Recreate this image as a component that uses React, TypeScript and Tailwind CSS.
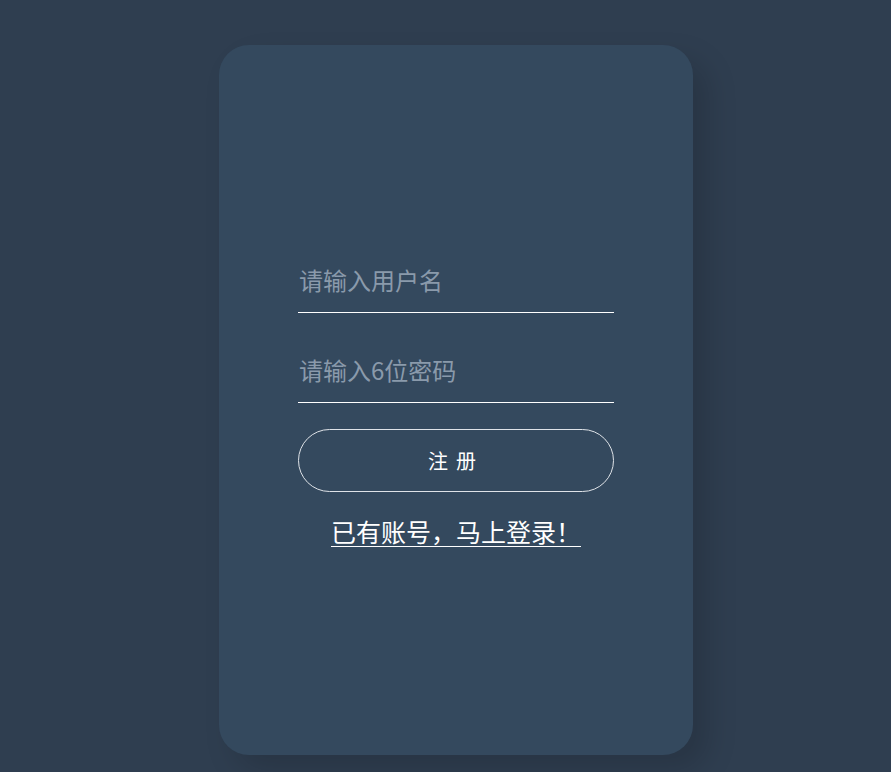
export default function App() {
  return (
    <div
      className="min-h-[772px] w-full bg-[#2f3e50] pt-[45px] pb-[17px] pl-[219px] flex"
      style={{ fontFamily: '"Noto Sans CJK SC", "Noto Sans", sans-serif' }}
    >
      <div className="w-[474px] h-[710px] rounded-[30px] bg-[#34495e] shadow-[15px_15px_30px_rgba(0,0,0,0.15)] flex flex-col items-center pt-[217px]">
        <div className="w-[316px] flex flex-col">
          <input
            type="text"
            placeholder="请输入用户名"
            className="h-[51px] w-full bg-transparent border-b border-white outline-none text-[24px] text-white placeholder:text-[#8a9aab] pb-[16px] pl-[1px]"
          />
          <input
            type="password"
            placeholder="请输入6位密码"
            className="mt-[39px] h-[51px] w-full bg-transparent border-b border-white outline-none text-[24px] text-white placeholder:text-[#8a9aab] pb-[16px] pl-[1px]"
          />
          <button className="mt-[26px] h-[63px] w-full rounded-full border border-[#dfe3e8] text-white text-[20px] tracking-[8px]">
            注册
          </button>
          <a href="#" className="mt-[22px] self-center text-white text-[25px] leading-[34px] underline underline-offset-[4px] decoration-1">
            已有账号，马上登录！
          </a>
        </div>
      </div>
    </div>
  );
}
